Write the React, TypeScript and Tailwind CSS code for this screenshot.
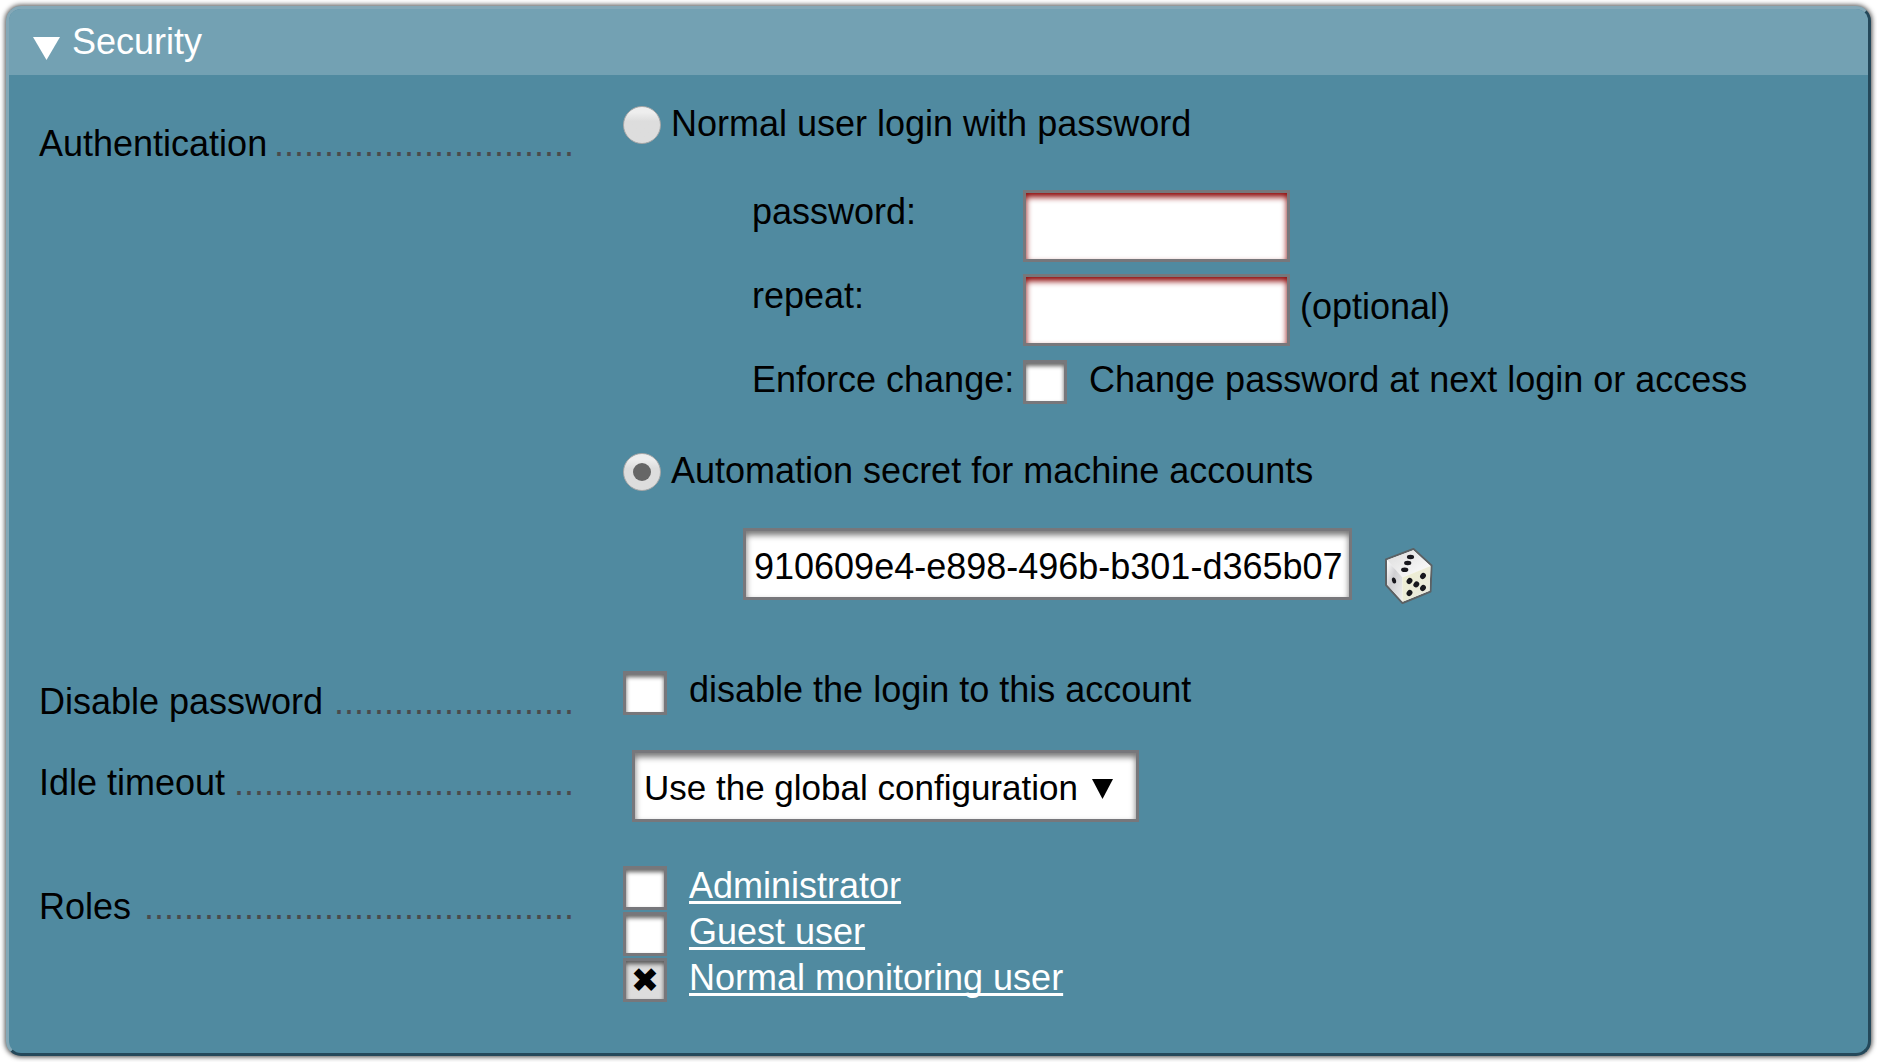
import type { ReactNode } from "react";

const boxShadow = "shadow-[inset_0_3px_4px_rgba(0,0,0,0.6)]";
const fieldShadow = "shadow-[inset_0_4px_6px_rgba(0,0,0,0.55)]";

function Row({ id, label, dots, className, labelClass, children }: {
  id: string;
  label: string;
  dots: number;
  className: string;
  labelClass: string;
  children: ReactNode;
}) {
  return (
    <div role="group" aria-labelledby={id} className={`grid grid-cols-[535px_1fr] gap-x-[49px] ${className}`}>
      <div className={`flex justify-between whitespace-nowrap ${labelClass}`}>
        <span id={id}>{label}</span>
        <span aria-hidden="true" className="text-[#4a4a4c]">{".".repeat(dots)}</span>
      </div>
      <div>{children}</div>
    </div>
  );
}

function Check({ id, checked }: { id: string; checked?: boolean }) {
  return (
    <input
      id={id}
      type="checkbox"
      defaultChecked={checked}
      className={`grid size-[44px] shrink-0 appearance-none place-items-center border-[3px] border-[#77777b] bg-white checked:bg-[#dddddd] checked:before:font-['DejaVu_Sans'] checked:before:text-[34px] checked:before:leading-none checked:before:text-black checked:before:content-['✖'] ${boxShadow}`}
    />
  );
}

function Radio({ id, label, checked }: { id: string; label: string; checked?: boolean }) {
  return (
    <div className="flex items-start gap-[10px]">
      <input
        id={id}
        type="radio"
        name="auth"
        defaultChecked={checked}
        className="mt-[6px] grid size-[38px] shrink-0 appearance-none place-items-center rounded-full border border-[#a9a9a9] bg-linear-to-b from-[#eeeeee] from-15% to-[#dddddd] to-40% checked:before:size-[18px] checked:before:rounded-full checked:before:bg-[#666666] checked:before:content-['']"
      />
      <label htmlFor={id} className="mt-px">{label}</label>
    </div>
  );
}

function Dice() {
  return (
    <svg viewBox="0 0 50 58" className="h-[58px] w-[50px]" aria-hidden="true">
      <defs>
        <linearGradient id="left" x1="0" y1="0" x2="1" y2="1">
          <stop offset="0" stopColor="#ffffff" />
          <stop offset="0.4" stopColor="#cfcfd2" />
          <stop offset="1" stopColor="#f0f0f0" />
        </linearGradient>
        <linearGradient id="top" x1="0" y1="0" x2="1" y2="1">
          <stop offset="0" stopColor="#dcdcdc" />
          <stop offset="1" stopColor="#ffffff" />
        </linearGradient>
        <linearGradient id="right" x1="0" y1="0" x2="1" y2="1">
          <stop offset="0" stopColor="#efefd0" />
          <stop offset="1" stopColor="#e8e8e0" />
        </linearGradient>
      </defs>
      <path d="M2 12.500 29.500 2 47.500 18.500 46.500 44.500 18.500 56 2 38Z" fill="#fff" stroke="#5b6164" strokeWidth="2" strokeLinejoin="round" />
      <path d="M3 13 29.300 3.200 46.500 19 18.500 30.500Z" fill="url(#top)" />
      <path d="M3 13 18.500 30.500V54.800L3 37.500Z" fill="url(#left)" />
      <path d="M18.500 30.500 46.500 19 45.600 43.800 18.500 54.800Z" fill="url(#right)" />
      <g fill="#17171d">
        <ellipse cx="26.500" cy="10" rx="3.600" ry="2.200" />
        <ellipse cx="23.700" cy="16" rx="3.600" ry="2.200" />
        <ellipse cx="20.700" cy="22.800" rx="3.600" ry="2.300" />
        <ellipse cx="10" cy="33.500" rx="2" ry="3.100" transform="rotate(-15 10 33.500)" />
        <ellipse cx="25.500" cy="34" rx="3.200" ry="2.700" transform="rotate(-50 25.500 34)" />
        <ellipse cx="39" cy="29" rx="3.200" ry="2.700" transform="rotate(-50 39 29)" />
        <ellipse cx="32.300" cy="37.400" rx="3.200" ry="2.700" transform="rotate(-50 32.300 37.400)" />
        <ellipse cx="25.500" cy="46" rx="3.200" ry="2.700" transform="rotate(-50 25.500 46)" />
        <ellipse cx="39" cy="41" rx="3.200" ry="2.700" transform="rotate(-50 39 41)" />
      </g>
    </svg>
  );
}

const roles = [
  { id: "admin", name: "Administrator" },
  { id: "guest", name: "Guest user" },
  { id: "user", name: "Normal monitoring user", checked: true },
];

const passwordClass =
  "h-[72px] w-[267px] shrink-0 border-[3px] border-[#77777b] bg-white px-2 shadow-[inset_0_4px_6px_#880000] outline-none";

export default function App() {
  return (
    <main className="bg-white p-[6px] font-['Liberation_Sans',Arial,sans-serif] text-[36px] leading-[46px] text-black">
      <section className="overflow-hidden rounded-[15px] border-[3px] border-t-[#84a8b7] border-r-[#24485a] border-b-[#24485a] border-l-[#84a8b7] bg-[#508aa0] shadow-[0_0_5px_1px_rgba(0,0,0,0.7)]">
        <h1 className="bg-[#73a1b3] text-white">
          <button type="button" aria-expanded="true" className="flex h-[66px] w-full items-center gap-[12px] pl-[24px] text-left">
            <svg viewBox="0 0 27 23" className="mt-[12px] h-[23px] w-[27px]" aria-hidden="true">
              <path d="M0 0H27L13.500 23Z" fill="currentColor" />
            </svg>
            <span>Security</span>
          </button>
        </h1>

        <form className="pb-[53px] pl-[30px]">
          <Row id="authentication" label="Authentication" dots={30} className="pt-[25px]" labelClass="pt-[21px]">
            <Radio id="login" label="Normal user login with password" />
            <div className="mt-[42px] ml-[129px] grid grid-cols-[271px_1fr] gap-y-3">
              <label htmlFor="password">password:</label>
              <div className="h-[72px] pt-px">
                <input id="password" type="password" className={`block ${passwordClass}`} />
              </div>
              <label htmlFor="repeat">repeat:</label>
              <div className="flex h-[72px] items-start gap-[10px] pt-px">
                <input id="repeat" type="password" className={passwordClass} />
                <span className="mt-[10px]">(optional)</span>
              </div>
              <span>Enforce change:</span>
              <div className="flex items-start gap-[22px]">
                <div className="mt-[3px] flex">
                  <Check id="enforce" />
                </div>
                <label htmlFor="enforce">Change password at next login or access</label>
              </div>
            </div>
            <div className="mt-[43px]">
              <Radio id="automation" label="Automation secret for machine accounts" checked />
            </div>
            <div className="mt-[34px] ml-[120px] flex items-start">
              <input
                type="text"
                aria-label="Automation secret"
                defaultValue="910609e4-e898-496b-b301-d365b07"
                className={`h-[72px] w-[609px] border-[3px] border-[#77777b] bg-white pt-[5px] pr-1 pl-2 outline-none ${fieldShadow}`}
              />
              <button type="button" aria-label="Create random secret" className="mt-[19px] ml-[32px]">
                <Dice />
              </button>
            </div>
          </Row>

          <Row id="disable-password" label="Disable password" dots={24} className="pt-[62px]" labelClass="pt-[12px]">
            <div className="flex items-start gap-[22px]">
              <div className="mt-1 flex">
                <Check id="disable" />
              </div>
              <label htmlFor="disable">disable the login to this account</label>
            </div>
          </Row>

          <Row id="idle-timeout" label="Idle timeout" dots={34} className="pt-[25px]" labelClass="pt-[10px]">
            <div className="relative ml-[9px] h-[72px] w-[507px]">
              <select
                aria-labelledby="idle-timeout"
                className={`h-full w-full appearance-none border-[3px] border-[#77777b] bg-white pt-1 pl-[9px] text-[35px] outline-none ${fieldShadow}`}
              >
                <option>Use the global configuration</option>
              </select>
              <svg viewBox="0 0 21 20" className="pointer-events-none absolute top-[29px] right-[26px] h-[20px] w-[21px]" aria-hidden="true">
                <path d="M0 0H21L10.500 20Z" />
              </svg>
            </div>
          </Row>

          <Row id="roles" label="Roles" dots={43} className="pt-[40px]" labelClass="pt-[22px]">
            <ul>
              {roles.map((role) => (
                <li key={role.id} className="flex h-[46px] items-start gap-[22px]">
                  <div className="mt-1 flex">
                    <Check id={role.id} checked={role.checked} />
                  </div>
                  <label htmlFor={role.id} className="mt-px">
                    <a href="#roles" className="text-white underline decoration-[3px] underline-offset-[3px] [text-decoration-skip-ink:none]">
                      {role.name}
                    </a>
                  </label>
                </li>
              ))}
            </ul>
          </Row>
        </form>
      </section>
    </main>
  );
}
